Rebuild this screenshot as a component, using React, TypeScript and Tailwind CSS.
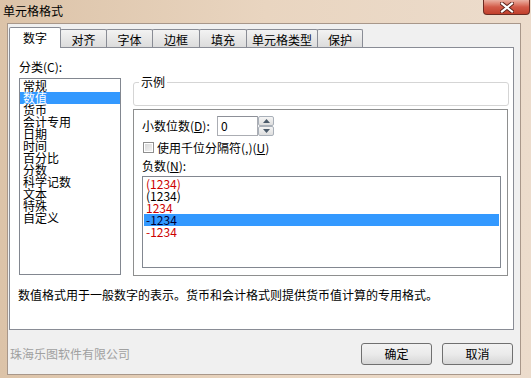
import React from "react";

const cats = ["常规", "数值", "货币", "会计专用", "日期", "时间", "百分比", "分数", "科学记数", "文本", "特殊", "自定义"];
const negs = [
  { t: "(1234)", red: true },
  { t: "(1234)", red: false },
  { t: "1234", red: true },
  { t: "-1234", red: false, sel: true },
  { t: "-1234", red: true },
];
const tabs = [
  { label: "数字", w: "w-[52px]", active: true },
  { label: "对齐", w: "w-[47px]" },
  { label: "字体", w: "w-[47px]" },
  { label: "边框", w: "w-[48px]" },
  { label: "填充", w: "w-[48px]" },
  { label: "单元格类型", w: "w-[72px]" },
  { label: "保护", w: "w-[46px]" },
];

export default function App() {
  return (
    <div className="w-[531px] h-[378px] overflow-hidden flex flex-col bg-gradient-to-r from-[#dcc3a8] via-[#e9d5c0] to-[#ecdccc] font-['Noto_Sans_CJK_SC',sans-serif] text-[12px] leading-[12px] text-black">
      {/* title bar */}
      <div className="h-[23px] flex items-start justify-between shrink-0">
        <div className="pl-[3px] pt-[5px] text-[12px] leading-[12px]">单元格格式</div>
        <div className="mr-[1px] w-[47px] h-[15px] rounded-b-[4px] border border-[#6b2b22] border-t-0 bg-gradient-to-b from-[#eab0a2] via-[#d25a48] to-[#c13f2b] flex items-center justify-center">
          <svg width="14" height="11" viewBox="0 0 14 11">
            <path d="M2 1.5 L12 9.5 M12 1.5 L2 9.5" stroke="#5a2018" strokeWidth="4" strokeLinecap="square" />
            <path d="M2 1.5 L12 9.5 M12 1.5 L2 9.5" stroke="#ffffff" strokeWidth="2.2" strokeLinecap="square" />
          </svg>
        </div>
      </div>
      {/* frame */}
      <div className="flex-1 flex pl-[7px] pr-[10px] pb-[3px]">
        <div className="flex-1 border border-[#a8978a] bg-[#f0f0f0] flex flex-col">
          {/* tabs */}
          <div className="ml-[1px] mt-[3px] h-[20px] flex items-end">
            {tabs.map((t) =>
              t.active ? (
                <div
                  key={t.label}
                  className={`${t.w} h-[21px] -mb-px relative z-10 bg-white border border-b-0 border-[#898c95] rounded-t-[2px] flex items-center justify-center pb-[1px]`}
                >
                  {t.label}
                </div>
              ) : (
                <div
                  key={t.label}
                  className={`${t.w} h-[18px] border border-b-0 border-[#898c95] rounded-t-[2px] bg-gradient-to-b from-[#f3f3f3] to-[#dcdcdc] flex items-center justify-center pt-[3px] -ml-px first:ml-0`}
                >
                  {t.label}
                </div>
              )
            )}
          </div>
          {/* panel */}
          <div className="ml-[1px] w-[505px] h-[283px] border border-[#898c95] bg-white flex flex-col shrink-0">
            <div className="flex pl-[9px]">
              <div className="w-[102px] pt-[13px] flex flex-col">
                <div className="leading-[12px]">分类(C):</div>
                <div className="mt-[5px] h-[197px] border border-[#828790] bg-white pt-[1px] flex flex-col">
                  {cats.map((c, i) => (
                    <div
                      key={c}
                      className={`h-[12px] leading-[12px] pl-[3px] whitespace-nowrap ${i === 1 ? "bg-[#3399ff] text-white" : ""}`}
                    >
                      {c}
                    </div>
                  ))}
                </div>
              </div>
              <div className="ml-[12px] w-[376px] flex flex-col">
                <fieldset className="mt-[28px] h-[30px] border border-[#d5d5d5] rounded-[3px] px-[5px]">
                  <legend className="px-[2px] leading-[12px]">示例</legend>
                </fieldset>
                <div className="mt-[3px] w-[375px] h-[167px] border border-[#8e8f8f] flex flex-col pl-[8px]">
                  <div className="mt-[6px] flex items-center h-[20px]">
                    <div className="w-[75px] whitespace-nowrap">
                      小数位数(<span className="underline">D</span>):
                    </div>
                    <div className="w-[41px] h-[20px] border border-[#abadb3] border-t-[#8d9098] bg-white pl-[3px] flex items-center">0</div>
                    <div className="w-[16px] h-[20px] flex flex-col">
                      <div className="h-[10px] border border-[#a9b0b9] rounded-[2px] bg-gradient-to-b from-[#f5f5f5] to-[#dedede] flex items-center justify-center">
                        <svg width="7" height="4" viewBox="0 0 7 4"><path d="M0 4 L3.5 0 L7 4 Z" fill="#4a5a6a" /></svg>
                      </div>
                      <div className="h-[10px] border border-[#a9b0b9] rounded-[2px] bg-gradient-to-b from-[#f5f5f5] to-[#dedede] flex items-center justify-center">
                        <svg width="7" height="4" viewBox="0 0 7 4"><path d="M0 0 L3.5 4 L7 0 Z" fill="#4a5a6a" /></svg>
                      </div>
                    </div>
                  </div>
                  <div className="mt-[5px] h-[13px] flex items-center">
                    <div className="ml-[1px] w-[11px] h-[11px] border border-[#8f8f8f] bg-white p-[1px]">
                      <div className="w-full h-full bg-gradient-to-br from-[#d8d8d8] to-[#f2f2f2]" />
                    </div>
                    <div className="ml-[3px] whitespace-nowrap">
                      使用千位分隔符(,)(<span className="underline">U</span>)
                    </div>
                  </div>
                  <div className="mt-[6px] h-[12px] leading-[12px]">
                    负数(<span className="underline">N</span>):
                  </div>
                  <div className="mt-[4px] w-[359px] h-[92px] border border-[#828790] bg-white pt-[1px] flex flex-col">
                    {negs.map((n, i) => (
                      <div
                        key={i}
                        className={`mx-[1px] h-[12px] leading-[12px] pl-[2px] ${n.sel ? "bg-[#3399ff] text-[#000033]" : n.red ? "text-[#cc0000]" : "text-black"}`}
                      >
                        {n.t}
                      </div>
                    ))}
                  </div>
                </div>
              </div>
            </div>
            <div className="mt-[13px] pl-[8px] whitespace-nowrap">
              数值格式用于一般数字的表示。货币和会计格式则提供货币值计算的专用格式。
            </div>
          </div>
          {/* footer */}
          <div className="mt-[13px] h-[22px] flex items-center pl-[2px] pr-[7px]">
            <div className="flex-1 text-[#a0a0a0]">珠海乐图软件有限公司</div>
            <div className="w-[71px] h-[22px] border border-[#707070] rounded-[3px] bg-gradient-to-b from-[#f2f2f2] via-[#ebebeb] to-[#d6d6d6] flex items-center justify-center">确定</div>
            <div className="ml-[10px] w-[71px] h-[22px] border border-[#707070] rounded-[3px] bg-gradient-to-b from-[#f2f2f2] via-[#ebebeb] to-[#d6d6d6] flex items-center justify-center">取消</div>
          </div>
        </div>
      </div>
    </div>
  );
}
